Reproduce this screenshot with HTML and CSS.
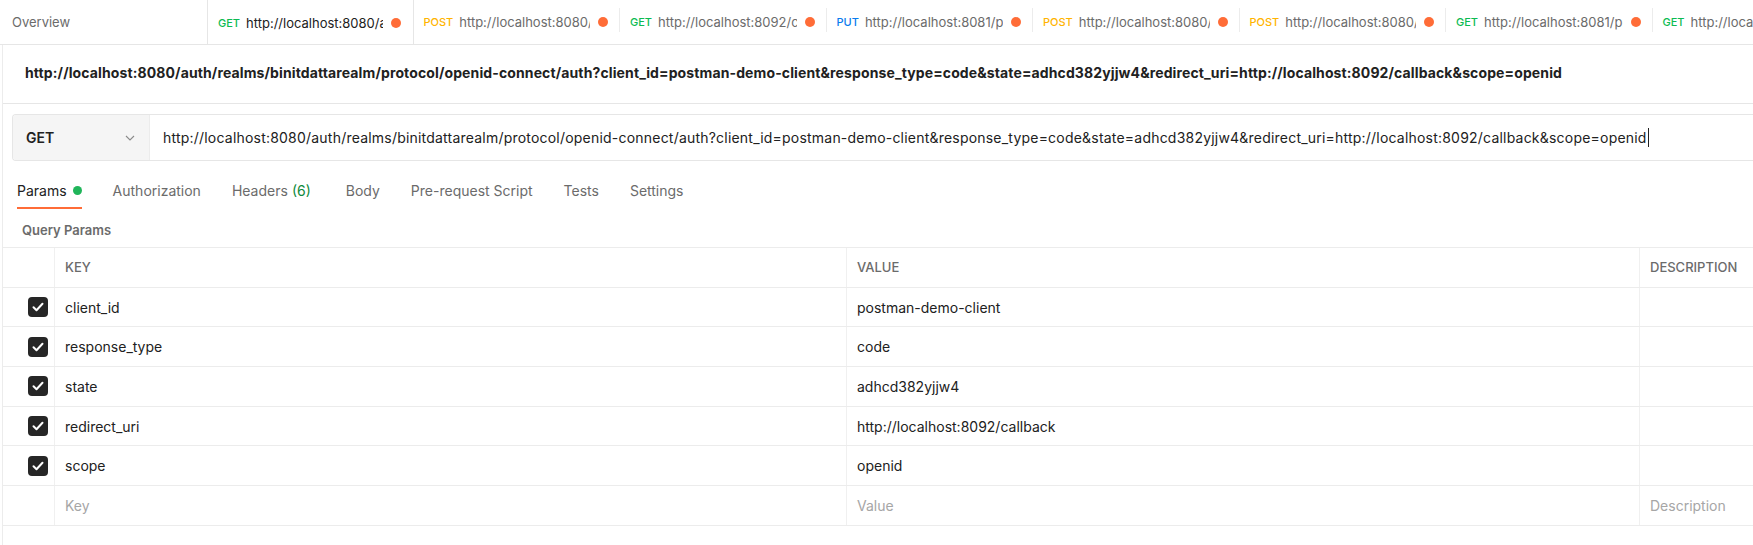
FILE: index.html
```html
<!DOCTYPE html>
<html>
<head>
<meta charset="utf-8">
<link rel="stylesheet" href="styles.css">
</head>
<body>
<div class="tabbar">
  <div class="tab overview">Overview</div>
  <div class="tab active"><span class="m get">GET</span><span class="u">http://localhost:8080/auth/realms</span><span class="dot"></span></div>
  <div class="tab sep"><span class="m post">POST</span><span class="u">http://localhost:8080/auth</span><span class="dot"></span></div>
  <div class="tab sep"><span class="m get">GET</span><span class="u">http://localhost:8092/callback</span><span class="dot"></span></div>
  <div class="tab sep"><span class="m put">PUT</span><span class="u">http://localhost:8081/products</span><span class="dot"></span></div>
  <div class="tab sep"><span class="m post">POST</span><span class="u">http://localhost:8080/auth</span><span class="dot"></span></div>
  <div class="tab sep"><span class="m post">POST</span><span class="u">http://localhost:8080/auth</span><span class="dot"></span></div>
  <div class="tab sep"><span class="m get">GET</span><span class="u">http://localhost:8081/products</span><span class="dot"></span></div>
  <div class="tab"><span class="m get">GET</span><span class="u">http://localhost:8081/products</span><span class="dot"></span></div>
</div>
<div class="main">
  <div class="title">http://localhost:8080/auth/realms/binitdattarealm/protocol/openid-connect/auth?client_id=postman-demo-client&amp;response_type=code&amp;state=adhcd382yjjw4&amp;redirect_uri=http://localhost:8092/callback&amp;scope=openid</div>
  <div class="urlbar">
    <div class="method">GET<svg class="chev" width="10" height="6" viewBox="0 0 10 6"><path d="M1 1l4 4 4-4" fill="none" stroke="#8a8a8a" stroke-width="1.1"/></svg></div>
    <div class="urlinput"><span class="caret">http://localhost:8080/auth/realms/binitdattarealm/protocol/openid-connect/auth?client_id=postman-demo-client&amp;response_type=code&amp;state=adhcd382yjjw4&amp;redirect_uri=http://localhost:8092/callback&amp;scope=openid</span></div>
  </div>
  <div class="reqtabs">
    <div class="rt on">Params<span class="gdot"></span></div>
    <div class="rt">Authorization</div>
    <div class="rt">Headers <span class="cnt">(6)</span></div>
    <div class="rt body">Body</div>
    <div class="rt">Pre-request Script</div>
    <div class="rt">Tests</div>
    <div class="rt">Settings</div>
  </div>
  <div class="qp">Query Params</div>
  <div class="table">
    <div class="row head">
      <div class="c cb"></div><div class="c">KEY</div><div class="c">VALUE</div><div class="c">DESCRIPTION</div>
    </div>
    <div class="row">
      <div class="c cb"><span class="box"><svg width="12" height="10" viewBox="0 0 12 10"><path d="M1.5 5.2l3 3 6-6.5" fill="none" stroke="#fff" stroke-width="2" stroke-linecap="round" stroke-linejoin="round"/></svg></span></div><div class="c">client_id</div><div class="c">postman-demo-client</div><div class="c"></div>
    </div>
    <div class="row">
      <div class="c cb"><span class="box"><svg width="12" height="10" viewBox="0 0 12 10"><path d="M1.5 5.2l3 3 6-6.5" fill="none" stroke="#fff" stroke-width="2" stroke-linecap="round" stroke-linejoin="round"/></svg></span></div><div class="c">response_type</div><div class="c">code</div><div class="c"></div>
    </div>
    <div class="row">
      <div class="c cb"><span class="box"><svg width="12" height="10" viewBox="0 0 12 10"><path d="M1.5 5.2l3 3 6-6.5" fill="none" stroke="#fff" stroke-width="2" stroke-linecap="round" stroke-linejoin="round"/></svg></span></div><div class="c">state</div><div class="c">adhcd382yjjw4</div><div class="c"></div>
    </div>
    <div class="row">
      <div class="c cb"><span class="box"><svg width="12" height="10" viewBox="0 0 12 10"><path d="M1.5 5.2l3 3 6-6.5" fill="none" stroke="#fff" stroke-width="2" stroke-linecap="round" stroke-linejoin="round"/></svg></span></div><div class="c">redirect_uri</div><div class="c">http://localhost:8092/callback</div><div class="c"></div>
    </div>
    <div class="row">
      <div class="c cb"><span class="box"><svg width="12" height="10" viewBox="0 0 12 10"><path d="M1.5 5.2l3 3 6-6.5" fill="none" stroke="#fff" stroke-width="2" stroke-linecap="round" stroke-linejoin="round"/></svg></span></div><div class="c">scope</div><div class="c">openid</div><div class="c"></div>
    </div>
    <div class="row">
      <div class="c cb"></div><div class="c ph">Key</div><div class="c ph">Value</div><div class="c ph">Description</div>
    </div>
  </div>
</div>
</body>
</html>
```
FILE: styles.css
```css
html, body {
  margin: 0;
  padding: 0;
  background: #fff;
  overflow: hidden;
}
body {
  width: 1753px;
  height: 545px;
  font-family: Inter, "Noto Sans", sans-serif;
  font-size: 14px;
  color: #212121;
}
.tabbar {
  display: flex;
  height: 44px;
  border-bottom: 1px solid #e6e6e6;
  white-space: nowrap;
  overflow: hidden;
}
.tab {
  flex: 0 0 auto;
  width: 206.5px;
  min-width: 0;
  overflow: hidden;
  box-sizing: border-box;
  display: flex;
  align-items: center;
  padding: 0 12px 0 10px;
  color: #6b6b6b;
  position: relative;
  font-size: 13px;
}
.tab.overview {
  width: 208px;
  padding-left: 12px;
}
.tab.active {
  color: #212121;
  height: 45px;
  border-left: 1px solid #e6e6e6;
  border-right: 1px solid #e6e6e6;
  background: #fff;
  margin-left: -1px;
  padding-left: 10px;
}
.tab.sep::after {
  content: "";
  position: absolute;
  right: 0;
  top: 8px;
  height: 24px;
  border-right: 1px solid #ececec;
}
.m {
  font-size: 11px;
  font-weight: 500;
  margin-right: 6px;
  flex: none;
}
.get { color: #0cbb52; }
.post { color: #ffb400; }
.put { color: #097bed; }
.u {
  flex: 1;
  min-width: 0;
  overflow: hidden;
}
.dot {
  flex: none;
  width: 10px;
  height: 10px;
  border-radius: 50%;
  background: #ff6c37;
  margin-left: 8px;
}
.main {
  margin-left: 2px;
  border-left: 1px solid #ececec;
  height: 500px;
}
.title {
  height: 58px;
  line-height: 56px;
  padding-left: 22px;
  font-weight: 700;
  letter-spacing: 0.12px;
  border-bottom: 1px solid #e6e6e6;
  white-space: nowrap;
}
.urlbar {
  margin: 10px 0 0 9px;
  height: 47px;
  box-sizing: border-box;
  border: 1px solid #e6e6e6;
  border-right: none;
  border-radius: 4px 0 0 4px;
  display: flex;
  width: 1760px;
}
.method {
  flex: 0 0 137px;
  box-sizing: border-box;
  background: #f5f5f5;
  display: flex;
  align-items: center;
  justify-content: space-between;
  padding: 0 14px 0 13px;
  font-weight: 600;
  border-right: 1px solid #ececec;
  border-radius: 3px 0 0 3px;
}
.urlinput {
  flex: 1;
  display: flex;
  align-items: center;
  padding-left: 13px;
  white-space: nowrap;
  letter-spacing: 0.21px;
}
.caret {
  border-right: 1px solid #212121;
  padding-right: 1px;
  line-height: 19px;
}
.reqtabs {
  display: flex;
  gap: 31px;
  padding-left: 14px;
  height: 48px;
  margin-top: 0;
}
.rt {
  display: flex;
  align-items: center;
  color: #6b6b6b;
  height: 100%;
  box-sizing: border-box;
  padding-top: 12px;
  border-bottom: 2px solid transparent;
}
.rt.on {
  color: #212121;
  border-bottom-color: #ff6c37;
}
.rt.body { margin-left: 4px; }
.gdot {
  width: 9px;
  height: 9px;
  border-radius: 50%;
  background: #20b55a;
  margin-left: 6px;
}
.cnt {
  color: #0f8a3c;
  margin-left: 4px;
}
.qp {
  height: 38px;
  line-height: 42px;
  padding-left: 19px;
  font-size: 13px;
  font-weight: 600;
  color: #6b6b6b;
}
.table {
  border-top: 1px solid #ececec;
}
.row {
  display: grid;
  grid-template-columns: 52px 792px 793px 200px;
  height: 39.7px;
  box-sizing: border-box;
  border-bottom: 1px solid #ececec;
}
.c {
  display: flex;
  align-items: center;
  padding-left: 10px;
  border-right: 1px solid #f0f0f0;
  white-space: nowrap;
}
.row .c:last-child { border-right: none; }
.head .c {
  color: #6b6b6b;
  font-size: 13px;
  font-weight: 500;
}
.cb {
  justify-content: flex-end;
  padding: 0 6px 0 0;
}
.box {
  width: 20px;
  height: 20px;
  border-radius: 4px;
  background: #262626;
  display: flex;
  align-items: center;
  justify-content: center;
}
.ph { color: #a6a6a6; }
```
